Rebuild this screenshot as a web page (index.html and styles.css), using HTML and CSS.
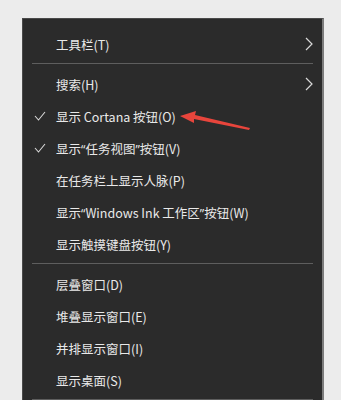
FILE: index.html
```html
<!DOCTYPE html>
<html lang="zh-CN">
<head>
<meta charset="utf-8">
<title>任务栏菜单</title>
<link rel="stylesheet" href="styles.css">
</head>
<body>
<div class="menu">
  <div class="item"><span class="check"></span><span class="label">工具栏(T)</span><svg class="chev" width="8" height="14" viewBox="0 0 8 14"><polyline points="1,1 7,7 1,13" fill="none" stroke="#d8d8d8" stroke-width="1.2"/></svg></div>
  <div class="sep"></div>
  <div class="item"><span class="check"></span><span class="label">搜索(H)</span><svg class="chev" width="8" height="14" viewBox="0 0 8 14"><polyline points="1,1 7,7 1,13" fill="none" stroke="#d8d8d8" stroke-width="1.2"/></svg></div>
  <div class="item"><span class="check"><svg width="12" height="10" viewBox="0 0 12 10"><polyline points="1,5 4.5,9 11,1" fill="none" stroke="#d8d8d8" stroke-width="1.1"/></svg></span><span class="label">显示 Cortana 按钮(O)</span></div>
  <div class="item"><span class="check"><svg width="12" height="10" viewBox="0 0 12 10"><polyline points="1,5 4.5,9 11,1" fill="none" stroke="#d8d8d8" stroke-width="1.1"/></svg></span><span class="label">显示<span class="q">“</span>任务视图<span class="q">”</span>按钮(V)</span></div>
  <div class="item"><span class="check"></span><span class="label">在任务栏上显示人脉(P)</span></div>
  <div class="item"><span class="check"></span><span class="label">显示<span class="q">“</span>Windows Ink 工作区<span class="q">”</span>按钮(W)</span></div>
  <div class="item"><span class="check"></span><span class="label">显示触摸键盘按钮(Y)</span></div>
  <div class="sep"></div>
  <div class="item"><span class="check"></span><span class="label">层叠窗口(D)</span></div>
  <div class="item"><span class="check"></span><span class="label">堆叠显示窗口(E)</span></div>
  <div class="item"><span class="check"></span><span class="label">并排显示窗口(I)</span></div>
  <div class="item"><span class="check"></span><span class="label">显示桌面(S)</span></div>
  <div class="sep"></div>
  <svg class="arrow" width="76" height="26" viewBox="0 0 76 26"><polygon points="2,8 18,3 17,7 72,20 71,22 16,11 16,15" fill="#e8453c"/></svg>
</div>
</body>
</html>
```
FILE: styles.css
```css
html, body {
  margin: 0;
  padding: 0;
}
body {
  width: 341px;
  height: 400px;
  overflow: hidden;
  background: #ececec;
  font-family: "Noto Sans CJK SC", "Open Sans", sans-serif;
}
.menu {
  position: relative;
  margin: 18px 0 0 22px;
  width: 299px;
  padding: 9px 0 40px;
  background: #2b2b2b;
  border: 1px solid #4a4a4a;
  border-right: 2px solid #7c7c7c;
}
.item {
  display: flex;
  align-items: center;
  height: 32px;
  padding: 0 9px 0 10px;
  color: #e9e9e9;
  font-size: 12.5px;
}
.check {
  width: 23px;
  flex: none;
  display: flex;
  align-items: center;
}
.check svg {
  margin-left: 1px;
}
.label {
  flex: 1;
  white-space: nowrap;
}
.q {
  font-family: "Open Sans", sans-serif;
}
.chev {
  flex: none;
}
.sep {
  height: 1px;
  margin: 3px 9px 4px 9px;
  background: #5e5e5e;
}
.arrow {
  position: absolute;
  left: 155px;
  top: 89px;
}
```
